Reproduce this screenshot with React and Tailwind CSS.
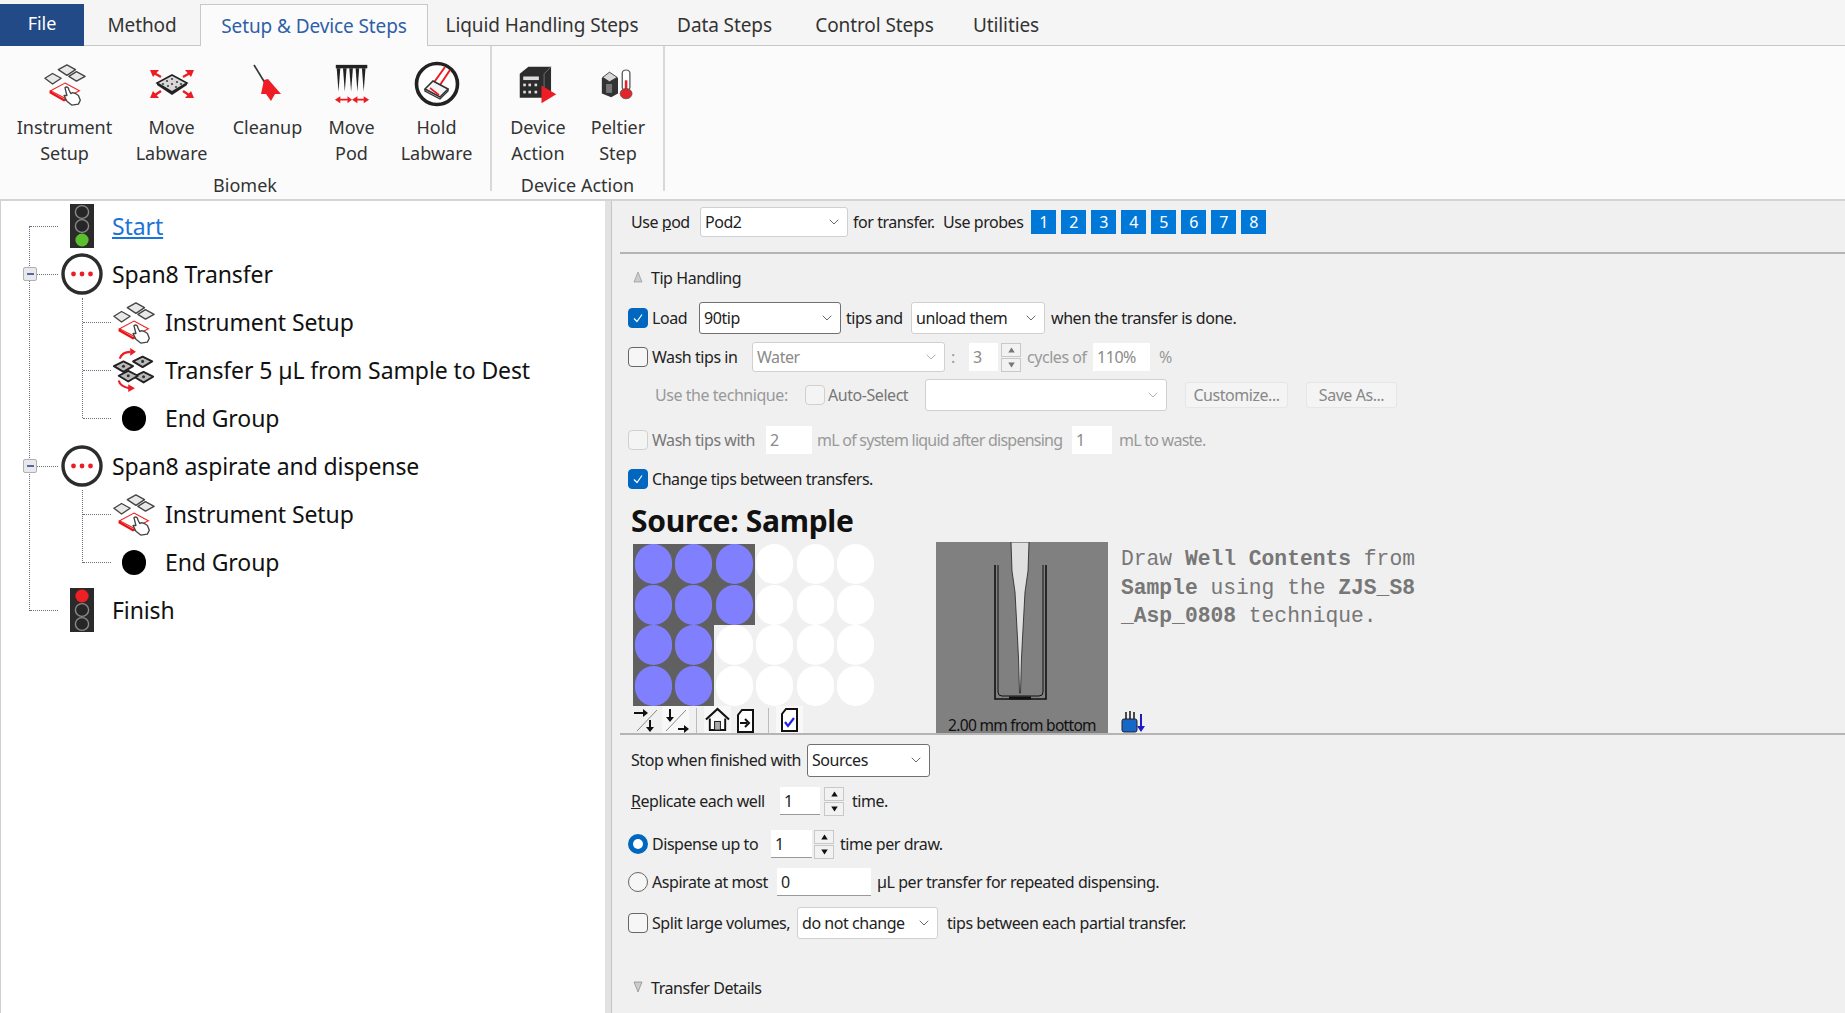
import { ChevronDown } from "lucide-react";

const tabs = [
  { label: "Method", cls: "w-[116px]" },
  { label: "Setup & Device Steps", cls: "w-[228px]", active: true },
  { label: "Liquid Handling Steps", cls: "w-[228px]" },
  { label: "Data Steps", cls: "w-[137px]" },
  { label: "Control Steps", cls: "w-[163px]" },
  { label: "Utilities", cls: "w-[100px]" },
];

const InstrumentIcon = ({ className }) => (
  <svg viewBox="0 0 46 46" className={className}>
    <g fill="#e8e8e8" stroke="#444" strokeWidth="1.4" strokeLinejoin="round">
      <polygon points="25,3 34,8 25,14 16,8" />
      <polygon points="10,12 19,17 10,23 2,17" />
      <polygon points="35,10 44,15 35,20 27,15" />
    </g>
    <polygon points="23,22 38,30 23,38 8,30" fill="#fff" stroke="#ee2a2a" strokeWidth="1.2" />
    <path d="M8 30v2l14 8 6-3" fill="none" stroke="#e8141c" strokeWidth="2.4" />
    <path d="M23 27c2-2 4 0 4 2l2 4 2-1 3 1 3 2 2 5-2 4-7 1-5-4-3-6 3 0z" fill="#fff" stroke="#444" strokeWidth="1.4" strokeLinejoin="round" />
  </svg>
);

const MoveLabwareIcon = () => (
  <svg viewBox="0 0 46 30" className="w-[46px] h-[30px]">
    <polygon points="23,6 38,14 23,23 8,14" fill="#d8d8d8" stroke="#222" strokeWidth="1.6" />
    <path d="M8 14v2l15 10 15-10v-2l-15 9z" fill="#222" />
    <g fill="#444">
      <circle cx="23" cy="10" r="1.1" /><circle cx="28" cy="13" r="1.1" /><circle cx="32" cy="15" r="1.1" />
      <circle cx="18" cy="12" r="1.1" /><circle cx="23" cy="15" r="1.1" /><circle cx="27" cy="18" r="1.1" />
      <circle cx="14" cy="15" r="1.1" /><circle cx="19" cy="17" r="1.1" />
    </g>
    <path d="M5 4l7 4M41 4l-7 4M6 26l6-4M40 26l-6-4" fill="none" stroke="#ee1c25" strokeWidth="2.4" />
    <g fill="#ee1c25">
      <polygon points="1,1 10,1 4,8" /><polygon points="45,1 36,1 42,8" />
      <polygon points="1,29 10,29 4,22" /><polygon points="45,29 36,29 42,22" />
    </g>
  </svg>
);

const CleanupIcon = () => (
  <svg viewBox="0 0 46 46" className="w-[46px] h-[46px]">
    <path d="M9 4L20 22" stroke="#333" strokeWidth="1.6" />
    <polygon points="19,19 23,18 36,33 30,33 26,40 21,33 16,33" fill="#ee1c25" />
  </svg>
);

const MovePodIcon = () => (
  <svg viewBox="0 0 40 46" preserveAspectRatio="none" className="w-[36px] h-[40px]">
    <rect x="2" y="1" width="35" height="4" fill="#222" />
    {[5, 12, 19, 26, 33].map((x) => (
      <polygon key={x} points={`${x - 2},5 ${x + 2},5 ${x},32`} fill="#222" />
    ))}
    <path d="M6 41h10M24 41h10" stroke="#ee1c25" strokeWidth="1.8" />
    <polygon points="1,41 7,37 7,45" fill="#ee1c25" />
    <polygon points="20,41 15,37 15,45" fill="#ee1c25" />
    <polygon points="20,41 26,37 26,45" fill="#ee1c25" />
    <polygon points="39,41 33,37 33,45" fill="#ee1c25" />
  </svg>
);

const HoldIcon = () => (
  <svg viewBox="0 0 46 46" className="w-[46px] h-[46px]">
    <circle cx="23" cy="23" r="20.5" fill="#fff" stroke="#222" strokeWidth="3.6" />
    <path d="M31 6L16 27M36 9L22 30" stroke="#ee1c25" strokeWidth="2" />
    <polygon points="19,20 34,28 26,36 11,28" fill="#f4f4f4" stroke="#333" strokeWidth="1.6" />
    <path d="M11 28v2l15 8 8-8v-2" fill="none" stroke="#333" strokeWidth="1.4" />
    <path d="M16 27l9 7" stroke="#ee1c25" strokeWidth="1.6" />
  </svg>
);

const DeviceIcon = () => (
  <svg viewBox="0 0 46 46" preserveAspectRatio="none" className="w-[40px] h-[41px]">
    <polygon points="2,11 12,3 38,3 38,30 30,38 2,38" fill="#2c2c2c" />
    <path d="M30 11l8-8M30 11v26" stroke="#777" strokeWidth="1" />
    <rect x="6" y="14" width="18" height="4" fill="#ddd" />
    <g fill="#ddd">
      <rect x="6" y="22" width="3" height="3" /><rect x="12" y="22" width="3" height="3" /><rect x="19" y="22" width="3" height="3" />
      <rect x="6" y="30" width="3" height="3" /><rect x="12" y="30" width="3" height="3" /><rect x="19" y="30" width="3" height="3" />
    </g>
    <polygon points="27,24 44,34 27,44" fill="#ee1c25" />
  </svg>
);

const PeltierIcon = () => (
  <svg viewBox="0 0 40 46" preserveAspectRatio="none" className="w-[34px] h-[34px]">
    <polygon points="1,15 10,7 20,15 20,36 12,41 1,36" fill="#333" />
    <polygon points="2,14 10,7 19,14 10,20" fill="#d8d8d8" stroke="#333" />
    <rect x="6" y="23" width="7" height="12" fill="#777" />
    <rect x="25" y="4" width="9" height="28" rx="4.5" fill="#fff" stroke="#555" strokeWidth="1.5" />
    <rect x="28" y="18" width="3" height="18" fill="#e3242b" />
    <circle cx="29.5" cy="36" r="7" fill="#e3242b" stroke="#555" />
  </svg>
);

const TrafficLight = ({ lit }) => (
  <svg viewBox="0 0 24 44" className="w-[24px] h-[44px]">
    <rect width="24" height="44" fill="#2a2a2a" />
    {[8, 22, 36].map((cy, i) => (
      <ellipse
        key={cy}
        cx="12"
        cy={cy}
        rx="6.6"
        ry="6.4"
        fill={i === 0 && lit === "red" ? "#ee2024" : i === 2 && lit === "green" ? "#5abf2e" : "#262626"}
        stroke={(i === 0 && lit === "red") || (i === 2 && lit === "green") ? "none" : "#8a8a8a"}
        strokeWidth="1.4"
      />
    ))}
  </svg>
);

const GroupIcon = () => (
  <svg viewBox="0 0 42 42" className="w-[42px] h-[42px]">
    <circle cx="21" cy="21" r="19" fill="#fff" stroke="#2c2c2c" strokeWidth="3.4" />
    <circle cx="12.5" cy="21" r="2.4" fill="#ee1c25" />
    <circle cx="21" cy="21" r="2.4" fill="#ee1c25" />
    <circle cx="29.5" cy="21" r="2.4" fill="#ee1c25" />
  </svg>
);

const TransferIcon = () => (
  <svg viewBox="0 0 46 46" className="w-[44px] h-[44px]">
    <g fill="#bbb" stroke="#222" strokeWidth="2" strokeLinejoin="round">
      <polygon points="32,9 42,14 32,20 22,14" />
      <polygon points="12,14 22,19 12,25 2,19" />
      <polygon points="33,25 43,30 33,36 23,30" />
      <polygon points="17,24 27,29 17,35 7,29" />
    </g>
    <g fill="#333">
      <circle cx="32" cy="14" r="1.6" /><circle cx="12" cy="19" r="1.6" /><circle cx="33" cy="30" r="1.6" /><circle cx="17" cy="29" r="1.6" />
    </g>
    <path d="M8 11c2-5 6-7 11-7M7 34c1 4 5 7 11 8" fill="none" stroke="#ee1c25" strokeWidth="2.2" />
    <polygon points="19,0 25,4 19,8" fill="#ee1c25" />
    <polygon points="17,38 24,42 17,46" fill="#ee1c25" />
  </svg>
);

const EndDot = () => <span className="block w-[24px] h-[25px] rounded-full bg-black" />;

const treeRows = [
  { id: "start", depth: 0, label: "Start", icon: <TrafficLight lit="green" />, link: true },
  { id: "g1", depth: 0, label: "Span8 Transfer", icon: <GroupIcon />, box: true },
  { id: "i1", depth: 1, label: "Instrument Setup", icon: <InstrumentIcon className="w-[44px] h-[44px]" /> },
  { id: "t1", depth: 1, label: "Transfer 5 µL from Sample to Dest", icon: <TransferIcon /> },
  { id: "e1", depth: 1, label: "End Group", icon: <EndDot /> },
  { id: "g2", depth: 0, label: "Span8 aspirate and dispense", icon: <GroupIcon />, box: true },
  { id: "i2", depth: 1, label: "Instrument Setup", icon: <InstrumentIcon className="w-[44px] h-[44px]" /> },
  { id: "e2", depth: 1, label: "End Group", icon: <EndDot /> },
  { id: "finish", depth: 0, label: "Finish", icon: <TrafficLight lit="red" /> },
];

const TreeRow = ({ row }) => (
  <div className="relative flex items-center h-[48px]">
    {row.depth === 0 ? (
      <>
        <span className="absolute left-[29px] top-[24px] w-[28px] border-t border-dotted border-gray-500" />
        {row.box && (
          <span className="absolute left-[22px] top-[17px] w-[14px] h-[14px] flex items-center justify-center rounded-[2px] border border-[#b0b0b0] bg-[#e8e8ee]">
            <span className="block w-[7px] h-[2px] bg-[#56689a]" />
          </span>
        )}
        <span className="w-[60px] ml-[51px] flex justify-center shrink-0">{row.icon}</span>
        <span className={row.link ? "text-[#1b74d8] underline" : "text-[#111]"}>{row.label}</span>
      </>
    ) : (
      <>
        <span className="absolute left-[82px] top-[24px] w-[28px] border-t border-dotted border-gray-500" />
        <span className="w-[50px] ml-[108px] flex justify-center shrink-0">{row.icon}</span>
        <span className="ml-[6px] text-[#111]">{row.label}</span>
      </>
    )}
  </div>
);

const Check = ({ checked, disabled, className = "" }) => (
  <span
    className={`flex items-center justify-center shrink-0 w-[20px] h-[20px] rounded-[4px] border ${
      checked ? "bg-[#0067c0] border-[#0067c0]" : disabled ? "bg-[#f4f4f4] border-[#d0d0d0]" : "bg-[#f6f6f6] border-[#666]"
    } ${className}`}
  >
    {checked && (
      <svg viewBox="0 0 12 12" className="w-[12px] h-[12px]">
        <path d="M2 6.5l3 3 5-7" fill="none" stroke="#fff" strokeWidth="1.2" />
      </svg>
    )}
  </span>
);

const Radio = ({ checked }) =>
  checked ? (
    <span className="flex items-center justify-center shrink-0 w-[20px] h-[20px] rounded-full bg-[#0067c0]">
      <span className="block w-[10px] h-[10px] rounded-full bg-white" />
    </span>
  ) : (
    <span className="block shrink-0 w-[20px] h-[20px] rounded-full border border-[#666] bg-[#f6f6f6]" />
  );

const Select = ({ value, className = "", dark, disabled }) => (
  <div
    className={`flex items-center justify-between shrink-0 bg-white rounded-[3px] border pl-[4px] pr-[5px] ${
      dark ? "border-[#707070]" : "border-[#d0d0d0]"
    } ${disabled ? "text-[#8a8a8a]" : ""} ${className}`}
  >
    <span>{value}</span>
    <ChevronDown size={16} strokeWidth={1.2} className={disabled ? "text-[#a0a0a0]" : "text-[#444]"} />
  </div>
);

const NumBox = ({ value, className = "", disabled }) => (
  <div
    className={`flex items-center shrink-0 bg-white pl-[4px] h-[28px] ${
      disabled ? "text-[#8a8a8a]" : "border-b border-[#999]"
    } ${className}`}
  >
    {value}
  </div>
);

const Spin = ({ className = "", disabled }) => (
  <div className={`flex flex-col gap-[1px] shrink-0 w-[20px] ${className}`}>
    {["M4 9l4-6 4 6z", "M4 3l4 6 4-6z"].map((d) => (
      <span key={d} className="flex items-center justify-center h-[14px] border border-[#c8c8c8] bg-[#f2f2f2]">
        <svg viewBox="0 0 16 12" className="w-[13px] h-[10px]">
          <path d={d} fill={disabled ? "#777" : "#111"} />
        </svg>
      </span>
    ))}
  </div>
);

const Label = ({ className = "", children }) => (
  <span className={`shrink-0 whitespace-nowrap ${className}`}>{children}</span>
);

const RibbonButton = ({ className, icon, lines }) => (
  <div className={`flex flex-col items-center ${className}`}>
    <div className="flex items-center justify-center h-[60px] pt-[16px]">{icon}</div>
    <div className="flex flex-col items-center leading-[26px] mt-[8px]">
      {lines.map((l) => (
        <span key={l}>{l}</span>
      ))}
    </div>
  </div>
);

const Well = ({ on }) => (
  <div className={`flex items-center justify-center h-[40.5px] ${on ? "bg-[#606060]" : ""}`}>
    <span className={`block w-[37px] h-[40px] rounded-full ${on ? "bg-[#8080ff]" : "bg-white"}`} />
  </div>
);

const PlateTools = () => (
  <div className="flex items-end h-[27px]">
    <span className="flex items-center justify-center w-[26px] h-[27px] bg-[#f0f0f0]">
      <svg viewBox="0 0 26 26" className="w-[26px] h-[26px]">
        <path d="M4 24L24 3" stroke="#888" />
        <path d="M1 6h9M17 13v9" stroke="#111" strokeWidth="2" />
        <path d="M10 2l5 4-5 4zM13 20l4 5 4-5z" fill="#111" />
      </svg>
    </span>
    <span className="flex items-center justify-center w-[27px] h-[27px] ml-[3px] bg-[#f8f8f8]">
      <svg viewBox="0 0 26 26" className="w-[26px] h-[26px]">
        <path d="M3 24L23 3" stroke="#888" />
        <path d="M7 2v10M15 22h8" stroke="#111" strokeWidth="2" />
        <path d="M3 10l4 5 4-5zM21 18l5 4-5 4z" fill="#111" />
      </svg>
    </span>
    <span className="block w-[1px] h-[25px] ml-[7px] bg-[#bbb]" />
    <span className="flex items-center justify-center w-[27px] h-[27px] ml-[7px] bg-[#f8f8f8]">
      <svg viewBox="0 0 26 26" className="w-[25px] h-[25px]">
        <path d="M1 13L13 2l12 11" fill="none" stroke="#111" strokeWidth="2.2" />
        <path d="M5 12v12h16V12" fill="#fff" stroke="#111" strokeWidth="2" />
        <rect x="10" y="15" width="6" height="9" fill="#aaa" stroke="#111" />
      </svg>
    </span>
    <span className="flex items-center justify-center w-[17px] h-[24px] ml-[6px]">
      <svg viewBox="0 0 17 24" className="w-[17px] h-[24px]">
        <path d="M5 1h11v22H1V6z" fill="#fff" stroke="#111" strokeWidth="2" />
        <path d="M3 14h7M8 10l4 4-4 4" fill="none" stroke="#111" strokeWidth="2" />
      </svg>
    </span>
    <span className="block w-[1px] h-[25px] ml-[14px] bg-[#bbb]" />
    <span className="flex items-center justify-center w-[27px] h-[27px] ml-[7px] bg-[#f8f8f8]">
      <svg viewBox="0 0 17 24" className="w-[17px] h-[24px]">
        <path d="M5 1h11v22H1V6z" fill="#fff" stroke="#111" strokeWidth="2" />
        <path d="M4 14l3 4 6-8" fill="none" stroke="#2222ee" strokeWidth="2.2" />
      </svg>
    </span>
  </div>
);

const WellView = () => (
  <div className="relative w-[172px] h-[191px] bg-[#808080] shrink-0">
    <svg viewBox="0 0 172 191" className="w-[172px] h-[191px]">
      <path d="M59 23V157H110V23" fill="none" stroke="#111" strokeWidth="1.6" />
      <path d="M62 23V150q0 4 4 4H103q4 0 4-4V23" fill="none" stroke="#111" strokeWidth="1" />
      <path d="M73 156h22" stroke="#111" strokeWidth="3" />
      <polygon points="75,0 93,0 92,29 89,50 86.5,96 85.5,116 84.5,151 83.5,151 82.5,116 81.5,96 79,50 76,29" fill="#e0e0e0" stroke="#222" strokeWidth="0.8" />
    </svg>
    <span className="absolute left-0 right-0 bottom-[-2px] text-center text-[15.5px] leading-[20px] tracking-[-0.7px] text-[#111] whitespace-nowrap">
      2.00 mm from bottom
    </span>
  </div>
);

const LiquidIcon = () => (
  <svg viewBox="0 0 24 22" className="w-[24px] h-[22px]">
    <path d="M5 1v9M9 0v10M13 1v9" stroke="#222" strokeWidth="1.6" />
    <rect x="1" y="8" width="15" height="13" rx="2" fill="#1668c8" stroke="#222" />
    <path d="M20 3v15" stroke="#1c1cc8" strokeWidth="2" />
    <polygon points="16,15 24,15 20,21" fill="#1c1cc8" />
  </svg>
);

export default function App() {
  return (
    <div className="w-[1845px] h-[1013px] overflow-hidden flex flex-col bg-white text-[#222] font-['Noto_Sans','Liberation_Sans',sans-serif]">
      {/* tabs */}
      <div className="flex items-end h-[46px] shrink-0 bg-[#f5f5f5] border-b border-[#c8c8c8] text-[19px] tracking-[-0.1px]">
        <div className="flex items-center justify-center w-[84px] h-[42px] mb-[-1px] pb-[3px] bg-[#224a86] text-white text-[18px]">File</div>
        {tabs.map((t) => (
          <div
            key={t.label}
            className={`flex items-center justify-center h-[42px] mb-[-1px] pt-[1px] ${t.cls} ${
              t.active ? "bg-[#fbfbfb] border border-b-0 border-[#c8c8c8] text-[#2f5fa8]" : "text-[#333]"
            }`}
          >
            {t.label}
          </div>
        ))}
      </div>

      {/* ribbon */}
      <div className="flex h-[155px] shrink-0 bg-[#fbfbfb] border-b-2 border-[#d4d4d4] text-[18px] text-[#333]">
        <div className="flex flex-col w-[492px] border-r-2 border-[#d8d8d8] mb-[8px]">
          <div className="flex shrink-0 pl-[11px] h-[126px]">
            <RibbonButton className="w-[107px]" icon={<InstrumentIcon className="w-[44px] h-[44px]" />} lines={["Instrument", "Setup"]} />
            <RibbonButton className="w-[107px]" icon={<MoveLabwareIcon />} lines={["Move", "Labware"]} />
            <RibbonButton className="w-[85px]" icon={<CleanupIcon />} lines={["Cleanup"]} />
            <RibbonButton className="w-[83px]" icon={<MovePodIcon />} lines={["Move", "Pod"]} />
            <RibbonButton className="w-[87px]" icon={<HoldIcon />} lines={["Hold", "Labware"]} />
          </div>
          <div className="text-center leading-[26px]">Biomek</div>
        </div>
        <div className="flex flex-col w-[173px] border-r-2 border-[#d8d8d8] mb-[8px]">
          <div className="flex shrink-0 pl-[7px] h-[126px]">
            <RibbonButton className="w-[78px]" icon={<DeviceIcon />} lines={["Device", "Action"]} />
            <RibbonButton className="w-[82px]" icon={<PeltierIcon />} lines={["Peltier", "Step"]} />
          </div>
          <div className="text-center leading-[26px]">Device Action</div>
        </div>
      </div>

      <div className="flex flex-1 min-h-0">
        {/* method tree */}
        <div className="relative w-[605px] shrink-0 border-l border-[#d0d0d0] pt-[1px] text-[23px] tracking-[-0.1px]">
          <span className="absolute left-[28px] top-[25px] h-[240px] border-l border-dotted border-gray-500" />
          <span className="absolute left-[28px] top-[265px] h-[145px] border-l border-dotted border-gray-500" />
          <span className="absolute left-[81px] top-[97px] h-[120px] border-l border-dotted border-gray-500" />
          <span className="absolute left-[81px] top-[289px] h-[73px] border-l border-dotted border-gray-500" />
          {treeRows.map((r) => (
            <TreeRow key={r.id} row={r} />
          ))}
        </div>
        <div className="w-[6px] shrink-0 bg-[#e2e2e2]" />
        <div className="w-[1px] shrink-0 bg-[#c4c4c4]" />

        {/* step editor */}
        <div className="flex-1 min-w-0 bg-[#f0f0f0] text-[16px] tracking-[-0.45px] text-[#222]">
          <div className="flex items-center h-[42px] pl-[19px]">
            <Label className="w-[69px]">Use <span className="underline">p</span>od</Label>
            <Select value="Pod2" className="w-[148px] h-[30px]" />
            <Label className="w-[90px] ml-[5px]">for transfer.</Label>
            <Label className="w-[88px]">Use probes</Label>
            <div className="flex gap-[5px]">
              {[1, 2, 3, 4, 5, 6, 7, 8].map((n) => (
                <span key={n} className="flex items-center justify-center w-[25px] h-[24px] bg-[#0078d7] text-white">{n}</span>
              ))}
            </div>
          </div>
          <div className="h-[2px] mt-[9px] ml-[8px] bg-[#b4b4b4]" />

          <div className="flex items-center h-[48px] pl-[21px]">
            <svg viewBox="0 0 10 12" className="w-[10px] h-[12px] mb-[2px]"><polygon points="5,1 9,11 1,11" fill="#ccc" stroke="#888" strokeWidth="0.6" /></svg>
            <Label className="ml-[8px]">Tip Handling</Label>
          </div>

          <div className="flex items-center h-[32px] pl-[16px]">
            <Check checked />
            <Label className="w-[47px] ml-[4px]">Load</Label>
            <Select value="90tip" dark className="w-[142px] h-[32px]" />
            <Label className="w-[65px] ml-[5px]">tips and</Label>
            <Select value="unload them" className="w-[134px] h-[32px]" />
            <Label className="ml-[6px]">when the transfer is done.</Label>
          </div>

          <div className="flex items-center h-[46px] pl-[16px]">
            <Check />
            <Label className="w-[100px] ml-[4px]">Wash tips in</Label>
            <Select value="Water" disabled className="w-[193px] h-[30px]" />
            <Label className="w-[18px] ml-[6px] text-[#999]">:</Label>
            <NumBox value="3" disabled className="w-[29px]" />
            <Spin disabled className="ml-[3px]" />
            <Label className="w-[66px] ml-[6px] text-[#999]">cycles of</Label>
            <NumBox value="110%" disabled className="w-[57px]" />
            <Label className="ml-[9px] text-[#999]">%</Label>
          </div>

          <div className="flex items-center h-[29px] pl-[43px] text-[#999]">
            <Label className="w-[150px]">Use the technique:</Label>
            <Check disabled />
            <Label className="w-[97px] ml-[3px] text-[#777]">Auto-Select</Label>
            <Select value="" disabled className="w-[242px] h-[32px]" />
            <span className="flex items-center justify-center w-[103px] h-[26px] ml-[18px] rounded-[3px] border border-[#e6e6e6] bg-[#f4f4f4] text-[#888]">Customize...</span>
            <span className="flex items-center justify-center w-[91px] h-[26px] ml-[18px] rounded-[3px] border border-[#e6e6e6] bg-[#f4f4f4] text-[#888]">Save As...</span>
          </div>

          <div className="flex items-center h-[61px] pl-[16px] text-[#999]">
            <Check disabled />
            <Label className="w-[114px] ml-[4px] text-[#777]">Wash tips with</Label>
            <NumBox value="2" disabled className="w-[46px]" />
            <Label className="w-[255px] ml-[5px] tracking-[-0.75px]">mL of system liquid after dispensing</Label>
            <NumBox value="1" disabled className="w-[40px]" />
            <Label className="ml-[7px] tracking-[-0.75px]">mL to waste.</Label>
          </div>

          <div className="flex items-center h-[18px] pl-[16px]">
            <Check checked />
            <Label className="ml-[4px]">Change tips between transfers.</Label>
          </div>

          <div className="flex items-center h-[54px] pt-[11px] pl-[19px] text-[30px] font-bold text-[#111] tracking-[-0.3px]">Source: Sample</div>

          <div className="flex h-[191px]">
            <div className="flex flex-col w-[324px] shrink-0 pt-[2px] pl-[21px]">
              <div className="grid grid-cols-[repeat(6,40.5px)] w-[243px]">
                {[0, 1, 2, 3].flatMap((r) =>
                  [0, 1, 2, 3, 4, 5].map((c) => <Well key={`${r}-${c}`} on={c < (r < 2 ? 3 : 2)} />)
                )}
              </div>
              <PlateTools />
            </div>
            <WellView />
            <div className="flex flex-col justify-between flex-1 pl-[13px] pt-[3px] font-['Liberation_Mono',monospace] text-[21.3px] leading-[28.5px] tracking-normal text-[#777]">
              <div className="whitespace-pre">
                Draw <b>Well Contents</b> from{"\n"}
                <b>Sample</b> using the <b>ZJS_S8</b>{"\n"}
                <b>_Asp_0808</b> technique.
              </div>
              <LiquidIcon />
            </div>
          </div>
          <div className="h-[2px] ml-[8px] bg-[#b4b4b4]" />

          <div className="flex items-center h-[50px] pl-[19px]">
            <Label className="w-[176px]">Stop when finished with</Label>
            <Select value="Sources" dark className="w-[123px] h-[33px]" />
          </div>
          <div className="flex items-center h-[32px] pl-[19px]">
            <Label className="w-[149px]"><span className="underline">R</span>eplicate each well</Label>
            <NumBox value="1" className="w-[40px]" />
            <Spin className="ml-[4px]" />
            <Label className="ml-[8px]">time.</Label>
          </div>
          <div className="flex items-center h-[54px] pl-[16px]">
            <Radio checked />
            <Label className="w-[119px] ml-[4px]">Dispense up to</Label>
            <NumBox value="1" className="w-[41px]" />
            <Spin className="ml-[2px]" />
            <Label className="ml-[6px]">time per draw.</Label>
          </div>
          <div className="flex items-center h-[22px] pl-[16px]">
            <Radio />
            <Label className="w-[125px] ml-[4px]">Aspirate at most</Label>
            <NumBox value="0" className="w-[94px]" />
            <Label className="ml-[6px]">µL per transfer for repeated dispensing.</Label>
          </div>
          <div className="flex items-center h-[60px] pl-[16px]">
            <Check />
            <Label className="w-[145px] ml-[4px]">Split large volumes,</Label>
            <Select value="do not change" className="w-[141px] h-[32px]" />
            <Label className="ml-[9px]">tips between each partial transfer.</Label>
          </div>
          <div className="flex items-center h-[70px] pl-[21px]">
            <svg viewBox="0 0 10 12" className="w-[10px] h-[12px] mb-[2px]"><polygon points="1,1 9,1 5,11" fill="#ccc" stroke="#777" strokeWidth="0.6" /></svg>
            <Label className="ml-[8px]">Transfer Details</Label>
          </div>
        </div>
      </div>
    </div>
  );
}
